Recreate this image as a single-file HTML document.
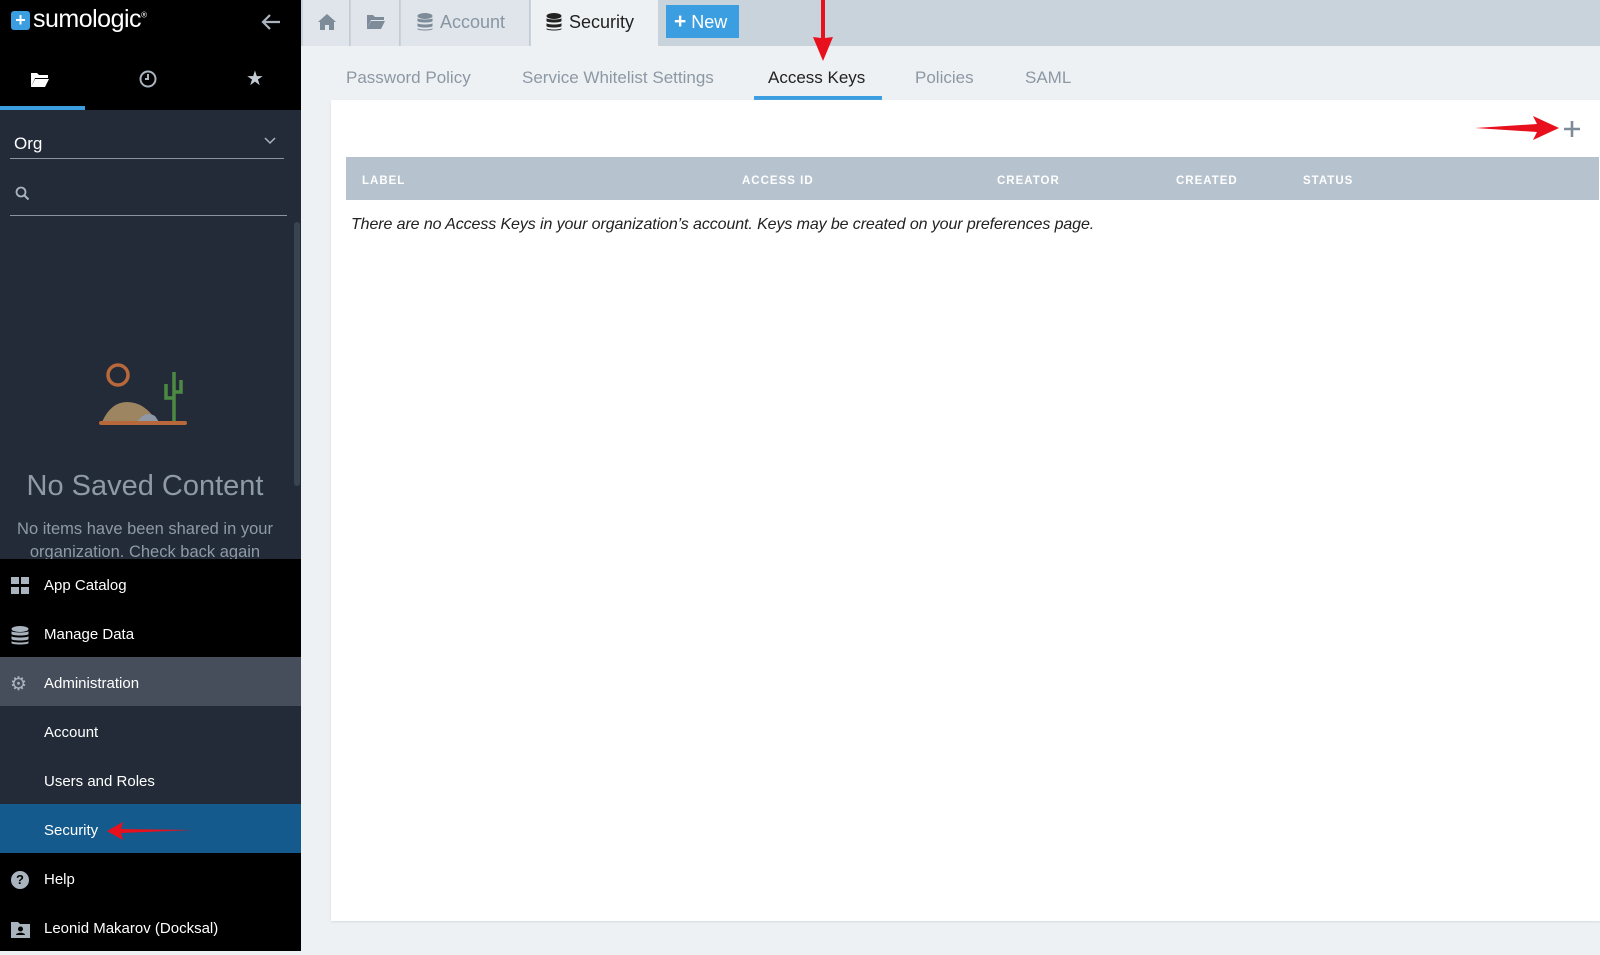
<!DOCTYPE html>
<html><head><meta charset="utf-8"><style>
*{margin:0;padding:0;box-sizing:border-box}
body{width:1600px;height:951px;overflow:hidden;font-family:"Liberation Sans",sans-serif;background:#eef1f4;position:relative}
.abs{position:absolute}
#side{left:0;top:0;width:301px;height:951px;background:#222b37}
#main{left:301px;top:0;width:1299px;height:951px;background:#eef1f4}
.mi{position:absolute;left:0;width:301px;height:49px;color:#fff;font-size:15px;line-height:53px;padding-left:44px}
.tab{position:absolute;top:0;height:46px;background:#dfe5ea;border-right:1px solid #c3ccd4;color:#8895a2;font-size:18px;line-height:44px}
.sub{position:absolute;top:68px;font-size:17px;color:#8c98a4}
.th{position:absolute;top:0;line-height:48px;font-size:11.5px;font-weight:bold;color:#fff;letter-spacing:1px}
</style></head><body>
<div id="side" class="abs">
 <div class="abs" style="left:0;top:0;width:301px;height:110px;background:#000"></div>
 <div class="abs" style="left:11px;top:11px;width:19px;height:19px;background:#3b9ee0;border-radius:3px;color:#fff;font-weight:bold;font-size:18px;line-height:19px;text-align:center">+</div>
 <div class="abs" style="left:33px;top:5px;color:#fff;font-size:25px;letter-spacing:-0.5px">sumologic<sup style="font-size:8px">®</sup></div>
 <svg class="abs" style="left:260px;top:12px" width="22" height="20"><path d="M20 10H3M10 3L3 10L10 17" stroke="#aab4bf" stroke-width="2.2" fill="none"/></svg>
 <svg class="abs" style="left:30px;top:71px" width="20" height="17"><path d="M1 2h6l2 2h9v3H5L1 16z M5 8h14l-4 8H1z" fill="#fff"/></svg>
 <svg class="abs" style="left:139px;top:70px" width="18" height="18"><circle cx="9" cy="9" r="7.5" stroke="#aab4bf" stroke-width="2" fill="none"/><path d="M9 4v5H6" stroke="#aab4bf" stroke-width="2" fill="none"/></svg>
 <div class="abs" style="left:246px;top:66px;color:#c5ccd3;font-size:20px">★</div>
 <div class="abs" style="left:0;top:106px;width:85px;height:4px;background:#3b9ee0"></div>
 <div class="abs" style="left:14px;top:134px;color:#fff;font-size:17px">Org</div>
 <svg class="abs" style="left:264px;top:137px" width="12" height="8"><path d="M1 1l5 5l5-5" stroke="#aab4bf" stroke-width="1.5" fill="none"/></svg>
 <div class="abs" style="left:10px;top:158px;width:274px;height:1px;background:#8a94a0"></div>
 <svg class="abs" style="left:15px;top:186px" width="16" height="16"><circle cx="6" cy="6" r="4.5" stroke="#aab4bf" stroke-width="1.8" fill="none"/><path d="M9.5 9.5l4 4" stroke="#aab4bf" stroke-width="2"/></svg>
 <div class="abs" style="left:10px;top:215px;width:277px;height:1px;background:#8a94a0"></div>
 <div class="abs" style="left:294px;top:222px;width:6px;height:264px;background:#3a4450;border-radius:3px"></div>
 <svg class="abs" style="left:97px;top:362px" width="95" height="76">
  <circle cx="21" cy="13" r="10" stroke="#b8683a" stroke-width="3.5" fill="none"/>
  <path d="M5 60 Q14 40 30 40 Q48 40 60 60z" fill="#9c8560"/>
  <path d="M40 60 Q48 48 58 54 L62 60z" fill="#8e98a6"/>
  <path d="M77 60V10M77 36h-8v-14M77 30h7v-12" stroke="#4c8a44" stroke-width="3.5" fill="none"/>
  <rect x="2" y="59" width="88" height="4" rx="2" fill="#b8683a"/>
 </svg>
 <div class="abs" style="left:0;top:470px;width:290px;text-align:center;color:#8e9aa6;font-size:29px">No Saved Content</div>
 <div class="abs" style="left:0;top:518px;width:290px;text-align:center;color:#8e9aa6;font-size:16.5px;line-height:23px">No items have been shared in your<br>organization. Check back again</div>
 <div class="mi" style="top:559px;background:#000">App Catalog</div>
 <svg class="abs" style="left:11px;top:577px" width="18" height="18"><rect x="0" y="0" width="8" height="7" fill="#aab4bf"/><rect x="10" y="0" width="8" height="7" fill="#aab4bf"/><rect x="0" y="10" width="8" height="7" fill="#aab4bf"/><rect x="10" y="10" width="8" height="7" fill="#aab4bf"/></svg>
 <div class="mi" style="top:608px;background:#000">Manage Data</div>
 <svg class="abs" style="left:11px;top:626px" width="18" height="19"><ellipse cx="9" cy="3" rx="8.5" ry="3" fill="#aab4bf"/><path d="M0.5 5v3c0 2 17 2 17 0V5c0 2-17 2-17 0zM0.5 10v3c0 2 17 2 17 0v-3c0 2-17 2-17 0zM0.5 15v2c0 2 17 2 17 0v-2c0 2-17 2-17 0z" fill="#aab4bf"/></svg>
 <div class="mi" style="top:657px;background:#454e5a">Administration</div>
 <div class="abs" style="left:10px;top:673px;color:#aab4bf;font-size:19px">⚙</div>
 <div class="mi" style="top:706px">Account</div>
 <div class="mi" style="top:755px">Users and Roles</div>
 <div class="mi" style="top:804px;background:#155a8c">Security</div>
 <svg class="abs" style="left:105px;top:821px" width="90" height="20"><path d="M2 10L18 1L16 8L88 9L16 12L18 19z" fill="#e8101c"/></svg>
 <div class="mi" style="top:853px;background:#000">Help</div>
 <div class="abs" style="left:11px;top:871px;width:18px;height:18px;border-radius:50%;background:#aab4bf;color:#000;font-size:13px;font-weight:bold;text-align:center;line-height:18px">?</div>
 <div class="mi" style="top:902px;background:#000">Leonid Makarov (Docksal)</div>
 <svg class="abs" style="left:11px;top:922px" width="19" height="16"><path d="M0 0h7l2 2h10v14H0z" fill="#aab4bf"/><circle cx="9.5" cy="7" r="2.5" fill="#000"/><path d="M5 13c0-3 9-3 9 0z" fill="#000"/></svg>
</div>
<div id="main" class="abs">
 <div class="abs" style="left:0;top:0;width:1299px;height:46px;background:#c9d3db"></div>
 <div class="tab" style="left:2px;width:47px"><svg style="position:absolute;left:15px;top:14px" width="18" height="16"><path d="M9 0L0 8h2v8h5v-5h4v5h5V8h2z" fill="#7e8b98"/></svg></div>
 <div class="tab" style="left:50px;width:49px"><svg style="position:absolute;left:15px;top:14px" width="20" height="16"><path d="M1 1h6l2 2h9v3H5L1 15z M5 7h14l-4 8H1z" fill="#7e8b98"/></svg></div>
 <div class="tab" style="left:100px;width:129px;padding-left:39px">Account<svg style="position:absolute;left:16px;top:13px" width="16" height="19"><ellipse cx="8" cy="3" rx="7.5" ry="3" fill="#7e8b98"/><path d="M0.5 5v3c0 2 15 2 15 0V5c0 2-15 2-15 0zM0.5 10v3c0 2 15 2 15 0v-3c0 2-15 2-15 0zM0.5 15v1c0 2 15 2 15 0v-1c0 2-15 2-15 0z" fill="#7e8b98"/></svg></div>
 <div class="tab" style="left:230px;width:127px;padding-left:38px;background:#eef1f4;color:#222;height:47px;border-right:none">Security<svg style="position:absolute;left:15px;top:13px" width="16" height="19"><ellipse cx="8" cy="3" rx="7.5" ry="3" fill="#222"/><path d="M0.5 5v3c0 2 15 2 15 0V5c0 2-15 2-15 0zM0.5 10v3c0 2 15 2 15 0v-3c0 2-15 2-15 0zM0.5 15v1c0 2 15 2 15 0v-1c0 2-15 2-15 0z" fill="#222"/></svg></div>
 <div class="abs" style="left:365px;top:5px;width:73px;height:33px;background:#3b9ee0;color:#fff;font-size:18px;line-height:33px;padding-left:8px"><b style="font-size:21px">+</b> New</div>
 <svg class="abs" style="left:510px;top:0" width="24" height="62"><path d="M10 0h4v38l8-1L12 61L2 37l8 1z" fill="#e8101c"/></svg>
 <div class="sub" style="left:45px">Password Policy</div>
 <div class="sub" style="left:221px">Service Whitelist Settings</div>
 <div class="sub" style="left:467px;color:#222">Access Keys</div>
 <div class="abs" style="left:453px;top:96px;width:128px;height:4px;background:#3b9ee0"></div>
 <div class="sub" style="left:614px">Policies</div>
 <div class="sub" style="left:724px">SAML</div>
 <div class="abs" style="left:30px;top:100px;width:1269px;height:821px;background:#fff;box-shadow:0 1px 2px #d5dbe0"></div>
 <svg class="abs" style="left:1174px;top:116px" width="86" height="24"><path d="M0 12L62 8L58 0L84 12L58 24L62 16z" fill="#e8101c"/></svg>
 <svg class="abs" style="left:1262px;top:120px" width="18" height="18"><path d="M9 1v16M1 9h16" stroke="#7e8b98" stroke-width="2.6"/></svg>
 <div class="abs" style="left:45px;top:157px;width:1253px;height:43px;background:#b6c2cd">
  <div class="th" style="left:16px">LABEL</div>
  <div class="th" style="left:396px">ACCESS ID</div>
  <div class="th" style="left:651px">CREATOR</div>
  <div class="th" style="left:830px">CREATED</div>
  <div class="th" style="left:957px">STATUS</div>
 </div>
 <div class="abs" style="left:50px;top:216px;font-size:16px;font-style:italic;color:#222;letter-spacing:-0.1px">There are no Access Keys in your organization’s account. Keys may be created on your preferences page.</div>
</div>
</body></html>
